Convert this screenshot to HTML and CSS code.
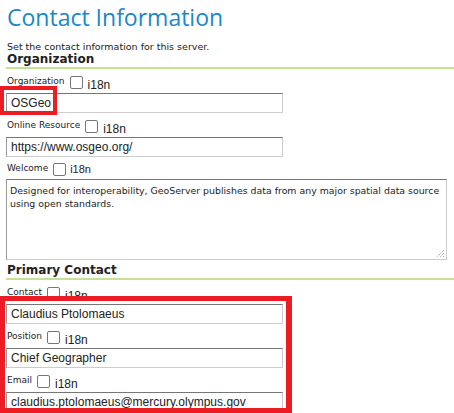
FILE: index.html
```html
<!DOCTYPE html>
<html>
<head>
<meta charset="utf-8">
<link rel="stylesheet" href="styles.css">
</head>
<body>
<div class="page">
  <h1 class="title">Contact Information</h1>
  <p class="desc">Set the contact information for this server.</p>

  <h2 class="section">Organization</h2>
  <div class="field">
    <div class="label-row"><span class="label">Organization</span><span class="cb"></span><span class="i18n">i18n</span></div>
    <div class="input">OSGeo</div>
  </div>
  <div class="field">
    <div class="label-row"><span class="label">Online Resource</span><span class="cb"></span><span class="i18n">i18n</span></div>
    <div class="input">https://www.osgeo.org/</div>
  </div>
  <div class="field">
    <div class="label-row small"><span class="label">Welcome</span><span class="cb"></span><span class="i18n">i18n</span></div>
    <div class="textarea">Designed for interoperability, GeoServer publishes data from any major spatial data source using open standards.<svg class="grip" width="9" height="9" viewBox="0 0 9 9"><path d="M8 1 L1 8 M8 4 L4 8 M8 7 L7 8" stroke="#888" stroke-width="1" stroke-dasharray="1 1" fill="none"/></svg></div>
  </div>

  <h2 class="section second">Primary Contact</h2>
  <div class="field">
    <div class="label-row"><span class="label">Contact</span><span class="cb"></span><span class="i18n">i18n</span></div>
    <div class="input">Claudius Ptolomaeus</div>
  </div>
  <div class="field">
    <div class="label-row"><span class="label">Position</span><span class="cb"></span><span class="i18n">i18n</span></div>
    <div class="input">Chief Geographer</div>
  </div>
  <div class="field">
    <div class="label-row"><span class="label">Email</span><span class="cb"></span><span class="i18n">i18n</span></div>
    <div class="input">claudius.ptolomaeus@mercury.olympus.gov</div>
  </div>
</div>
<div class="mark mark-org"></div>
<div class="mark mark-contact"></div>
</body>
</html>
```
FILE: styles.css
```css
html, body {
  margin: 0;
  padding: 0;
  background: #fff;
  overflow: hidden;
}
body {
  position: relative;
  width: 454px;
  height: 413px;
  font-family: "Liberation Sans", Arial, sans-serif;
  color: #222;
}
.page {
  padding: 0 0 0 6px;
}
.title {
  margin: 0;
  padding-top: 2px;
  height: 35px;
  font-family: "Open Sans", "Noto Sans", sans-serif;
  font-weight: 400;
  font-size: 23px;
  line-height: 30px;
  color: #1b88c7;
  padding-left: 1px;
}
.desc {
  margin: 4px 0 0 1px;
  font-family: "DejaVu Sans", sans-serif;
  font-size: 9.5px;
  line-height: 11px;
  color: #222;
}
.section {
  margin: 0;
  padding-left: 1px;
  font-family: "DejaVu Sans", sans-serif;
  font-weight: bold;
  font-size: 12px;
  line-height: 14px;
  color: #222;
  border-bottom: 2px solid #c3e295;
  padding-bottom: 1px;
}
.section.second {
  margin-top: 3px;
}
.field {
  width: 100%;
}
.label-row {
  display: flex;
  align-items: flex-start;
  height: 20px;
  padding-top: 6px;
  box-sizing: border-box;
}
.label-row + .input {
  margin-top: 4px;
}
.label {
  font-family: "DejaVu Sans", sans-serif;
  font-size: 9px;
  line-height: 12px;
  color: #222;
  padding-left: 1px;
}
.cb {
  width: 11px;
  height: 11px;
  border: 1px solid #777;
  border-radius: 2px;
  margin: 1px 0 0 5px;
  background: #fff;
}
.i18n {
  font-family: "Liberation Sans", Arial, sans-serif;
  font-size: 12px;
  line-height: 14px;
  margin: 3px 0 0 5px;
  color: #222;
}
.input {
  width: 277px;
  height: 20px;
  box-sizing: border-box;
  border: 1px solid;
  border-color: #767676 #cccccc #cccccc #999999;
  font-family: "Liberation Sans", Arial, sans-serif;
  font-size: 12px;
  line-height: 18px;
  padding-left: 4px;
  color: #222;
  white-space: nowrap;
  overflow: hidden;
}
.label-row.small {
  padding-top: 5px;
}
.label-row.small .i18n {
  margin-top: 0;
  margin-left: 4px;
  font-size: 11px;
}
.label-row.small + .textarea {
  margin-top: 2px;
}
.textarea {
  position: relative;
  width: 441px;
  height: 81px;
  box-sizing: border-box;
  border: 1px solid;
  border-color: #767676 #cccccc #cccccc #999999;
  font-family: "DejaVu Sans", sans-serif;
  font-size: 9.4px;
  line-height: 13px;
  padding: 4px 3px 0 3px;
  color: #222;
}
.grip {
  position: absolute;
  right: 1px;
  bottom: 1px;
}
.mark {
  position: absolute;
  border: 5px solid #ec1c24;
  box-sizing: border-box;
}
.mark-org {
  left: 0;
  top: 86px;
  width: 57px;
  height: 29px;
  border-width: 4px;
}
.mark-contact {
  left: 0;
  top: 296px;
  width: 292px;
  height: 117px;
  border-width: 5px 6px 5px 5px;
}
```
